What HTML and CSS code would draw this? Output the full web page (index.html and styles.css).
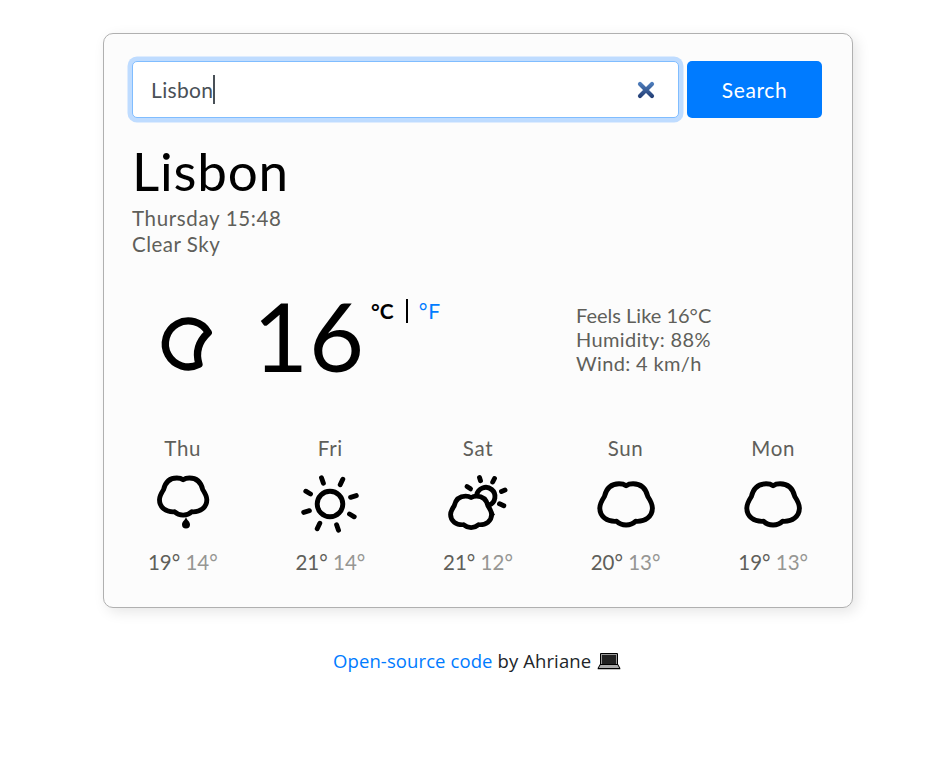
FILE: index.html
```html
<!DOCTYPE html>
<html lang="en">
<head>
<meta charset="utf-8">
<title>Weather</title>
<link rel="stylesheet" href="styles.css">
</head>
<body>
<main class="card">
  <form class="search">
    <div class="field"><span class="query">Lisbon</span><span class="caret"></span>
      <svg class="clear" viewBox="0 0 18 18"><defs><linearGradient id="blue" gradientUnits="userSpaceOnUse" x1="0" y1="1" x2="0" y2="17"><stop offset="0" stop-color="#5081c0"/><stop offset="1" stop-color="#223c72"/></linearGradient></defs><path d="M3 3L15 15M15 3L3 15" stroke="url(#blue)" stroke-width="4.2" stroke-linecap="round"/></svg>
    </div>
    <button class="submit" type="button">Search</button>
  </form>
  <h1>Lisbon</h1>
  <div class="meta"><div class="when">Thursday 15:48</div><div class="sky">Clear Sky</div></div>
  <section class="current">
    <svg class="moon" viewBox="0 0 60 60"><path d="M49.300 18.500A23 23 0 1 0 40 50.300C36.500 39 39 28 49.300 18.500Z"/></svg>
    <div class="temp">16</div>
    <div class="units"><b>°C</b><i class="bar"></i><a>°F</a></div>
    <div class="details"><div class="feels">Feels Like 16°C</div><div class="humid">Humidity: 88%</div><div class="wind">Wind: 4 km/h</div></div>
  </section>
  <section class="forecast">
    <div class="day"><div class="name">Thu</div>
      <svg viewBox="0 0 80 70"><defs><path id="cloud" d="M40.500 17.700C38.500 16.300 36 15.800 33.500 15.800C25.500 15.800 20.700 20.500 18.800 28.500C16.200 32.500 14.200 36 14.200 40C14.200 48.500 21.500 54 31 53.300C36 58.300 45 58.300 50 53.300C59.500 54 66.800 48.500 66.800 40C66.800 36 64.800 32.500 62.200 28.500C60.300 20.500 55.500 15.800 47.500 15.800C45 15.800 42.500 16.300 40.500 17.700Z"/></defs><use href="#cloud" transform="translate(3.700 -4.200) scale(.9)" stroke-width="5.4"/><path class="solid" d="M43 49C42.300 52 39 53.500 39 56.500A4 4 0 0 0 47 56.500C47 53.500 43.700 52 43 49Z"/></svg>
      <div class="range">19° <span>14°</span></div></div>
    <div class="day"><div class="name">Fri</div>
      <svg viewBox="0 0 80 70"><circle cx="40" cy="36" r="12.8"/><path d="M31.500 9.800L33.400 15.200M52.800 11.300L50.200 16.800M15.800 23.200L20.500 26M60.600 29.300L66.300 27.600M48.500 62.200L46.600 56.800M27.200 60.700L29.800 55.200M64.200 48.800L59.500 46M19.400 42.700L13.700 44.400"/></svg>
      <div class="range">21° <span>14°</span></div></div>
    <div class="day"><div class="name">Sat</div>
      <svg viewBox="0 0 80 70"><path d="M38.700 27A9.200 9.200 0 1 1 51 37.200M41.500 9.500L42.500 12.700M56.500 10.500L54.700 14M29 18.500L32.500 20.800M63.500 23.500L67 22M61.500 35.800L65.800 37.800"/><path class="solid" d="M51 38L57 46.500L52 52Z"/><use href="#cloud" transform="translate(1.500 16.200) scale(.78 .76)" stroke-width="6.2"/></svg>
      <div class="range">21° <span>12°</span></div></div>
    <div class="day"><div class="name">Sun</div>
      <svg viewBox="0 0 80 70"><use href="#cloud" x="-.4"/></svg>
      <div class="range">20° <span>13°</span></div></div>
    <div class="day"><div class="name">Mon</div>
      <svg viewBox="0 0 80 70"><use href="#cloud" x="-.4"/></svg>
      <div class="range">19° <span>13°</span></div></div>
  </section>
</main>
<footer><span class="credit"><a>Open-source code</a> by Ahriane</span>
  <svg class="laptop" viewBox="0 0 24 18"><path d="M4 1H20Q21 1 21 2V12L23.300 16V17.300H.7V16L3 12V2Q3 1 4 1Z" fill="#000"/><path d="M4 2H20V12H4Z" fill="#999"/><path d="M5 3H19V12H5Z" fill="#222"/><path d="M3.500 13H20.500L22.300 16H1.700Z" fill="#aaa"/></svg>
</footer>
</body>
</html>
```

FILE: styles.css
```css
* { box-sizing: border-box; }
body { margin: 0; background: #fff; font-family: Lato, "Liberation Sans", sans-serif; color: #5f5f5a; }
.card { width: 750px; height: 575px; margin: 33px 0 0 103px; padding: 27px 30px 0 28px; background: #fcfcfc; border: 1px solid #b0b0b0; border-radius: 10px; box-shadow: 4px 4px 14px rgba(0,0,0,.1); }
.search { display: flex; gap: 8px; height: 57px; margin: 0; }
.field { display: flex; align-items: center; width: 547px; padding: 0 23px 0 18px; background: #fff; border: 1px solid #80bdff; border-radius: 5px; box-shadow: 0 0 0 4.500px #bfdcff; color: #495057; font-size: 21px; letter-spacing: .35px; }
.caret { width: 2px; height: 29px; background: #495057; }
.clear { width: 18px; height: 18px; margin-left: auto; }
.submit { width: 135px; border: 0; padding: 0; border-radius: 5px; background: #007bff; color: #fff; font: 21px Lato, sans-serif; letter-spacing: .6px; }
h1 { margin: 20px 0 0; font-size: 53px; line-height: 66px; font-weight: 400; letter-spacing: .8px; color: #000; }
.meta { margin-top: 1px; font-size: 20.500px; line-height: 26px; letter-spacing: .65px; }
.sky { letter-spacing: .5px; }
.current { display: flex; align-items: flex-start; height: 100px; margin-top: 36px; }
.moon { width: 60px; height: 60px; margin: 21px 0 0 27px; }
.temp { width: 110px; margin: -8px 0 0 34px; font-size: 95px; line-height: 100px; letter-spacing: 1px; color: #000; }
.units { display: flex; align-items: center; width: 204px; margin: 4px 0 0 8px; font-size: 21px; line-height: 28px; color: #000; }
.bar { width: 2px; height: 24px; margin: 0 11px 0 12px; background: #000; }
.units a { letter-spacing: 1px; }
a { color: #007bff; }
.details { margin: 10px 0 0 1px; font-size: 20px; line-height: 24px; letter-spacing: .35px; white-space: nowrap; }
.feels { letter-spacing: 0; }
.forecast { display: grid; grid-template-columns: repeat(5, 147.600px); margin: 42px 0 0 -23px; text-align: center; font-size: 20.500px; }
.name, .range { line-height: 26px; }
.name { letter-spacing: .7px; }
.day svg { display: block; width: 80px; height: 70px; margin: 7px auto 11px; }
.moon, .day svg { fill: none; stroke: #000; stroke-width: 4.900; stroke-linecap: round; stroke-linejoin: round; }
.moon { stroke-width: 7.300; }
.day .solid { fill: #000; stroke: none; }
.range span { color: #969693; }
footer { display: flex; align-items: center; height: 28px; margin: 38px 0 0 333px; font: 18.500px "Open Sans", sans-serif; letter-spacing: .1px; color: #212529; }
.laptop { width: 24px; height: 18px; margin: 2px 0 0 6px; }
```
